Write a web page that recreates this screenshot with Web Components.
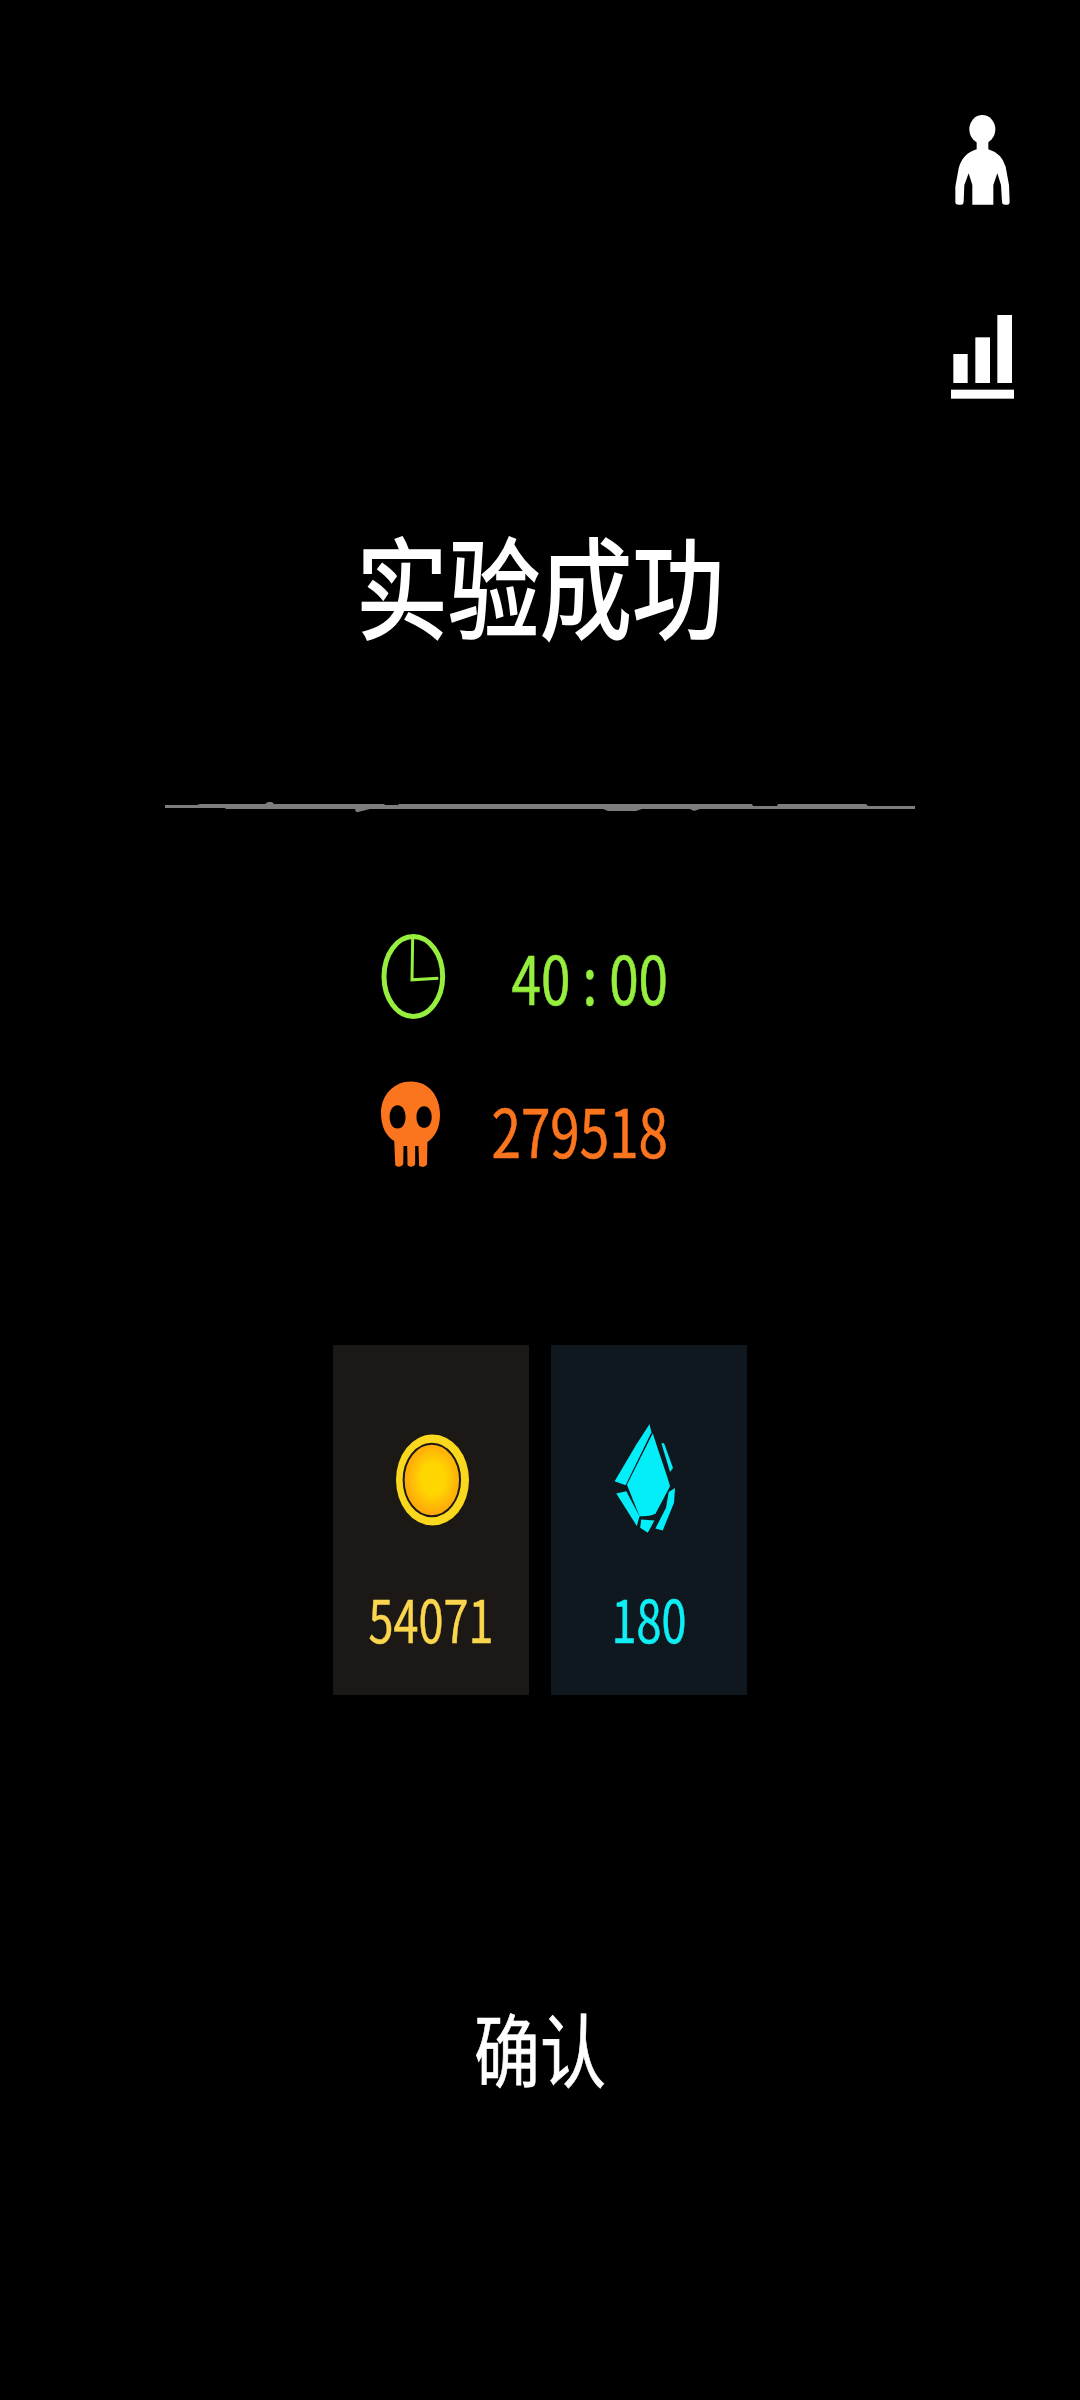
<!DOCTYPE html>
<html lang="zh-CN">
<head>
<meta charset="UTF-8">
<title>实验成功</title>
<style>
    html, body { margin: 0; background: #000; }
    body { width: 1080px; height: 2400px; overflow: hidden; }
</style>
</head>
<body>
    <result-screen>
        <side-nav slot="nav"></side-nav>
        <tall-text slot="title" size="92" box="120" stroke="1.6">实验成功</tall-text>
        <rough-line slot="line"></rough-line>
        <stat-row slot="stats" icon="clock" color="#96ee3f" shift="0">40<i>:</i>00</stat-row>
        <stat-row slot="stats" icon="skull" color="#fb741e" shift="10">279518</stat-row>
        <reward-card slot="cards" icon="coin" bg="#1c1815" color="#fad64e" value="54071"></reward-card>
        <reward-card slot="cards" icon="gem" bg="#10181f" color="#10eef5" value="180"></reward-card>
        <tall-text slot="confirm" size="66" box="90" stroke="0.6">确认</tall-text>
    </result-screen>

    <script>
        const ICONS = {
            clock: `<svg width="65" height="87" viewBox="120 95 195 260" fill="none" stroke="#96ee3f">
                <ellipse cx="217" cy="225" rx="88" ry="120" stroke-width="15"/>
                <path d="M215 110 L213 235 L292 230" stroke-width="9"/>
            </svg>`,
            skull: `<svg width="59" height="87" viewBox="125 545 178 260">
                <path fill="#fb741e" fill-rule="evenodd" d="M215 545 C270 545 303 590 303 645 C303 690 285 715 265 728 L264 795 Q258 806 245 802 L240 800 L238 740 L228 740 L228 796 Q218 808 205 798 L204 740 L193 740 L192 796 Q180 808 168 798 L165 725 C140 710 125 680 125 640 C125 585 165 545 215 545 Z
                M175 617 C160 617 151 633 151 652 C151 672 160 687 175 687 C190 687 199 672 199 652 C199 633 190 617 175 617 Z
                M255 620 C241 620 232 635 232 652 C232 671 241 685 255 685 C269 685 278 671 278 652 C278 635 269 620 255 620 Z"/>
            </svg>`,
            coin: `<svg style="margin:4px 0 0 3px" width="73" height="92" viewBox="227 310 220 274">
                <defs><radialGradient id="g" cx=".52" cy=".48" r=".52">
                    <stop offset=".4" stop-color="#ffd600"/><stop offset="1" stop-color="#ffa40c"/>
                </radialGradient></defs>
                <ellipse cx="337" cy="447" rx="110" ry="137" fill="#f9d81e"/>
                <ellipse cx="335" cy="447" rx="85" ry="109" fill="url(#g)" stroke="#1c1815" stroke-width="6"/>
            </svg>`,
            gem: `<svg style="margin-right:9px" width="63" height="110" viewBox="880 275 190 330" fill="#04eefa">
                <path d="M1000 305 C1020 370 1040 420 1052 465 L1008 548 C990 556 975 556 960 555 L922 460 Z"/>
                <polygon points="990,278 996,302 918,462 885,450 950,340"/>
                <polygon points="1026,335 1034,335 1061,410 1052,422"/>
                <polygon points="890,487 920,480 960,555 952,585"/>
                <polygon points="965,565 1005,568 985,605 962,590"/>
                <polygon points="1048,482 1067,470 1064,515 1030,598 1008,592 1040,530"/>
            </svg>`
        };

        // the reference is stretched vertically, so text is drawn with a scaleY
        class TallText extends HTMLElement {
            constructor() {
                super();
                const size = this.getAttribute('size');
                const box = this.getAttribute('box');
                const stroke = this.getAttribute('stroke') || 0;
                this.attachShadow({mode: 'open'}).innerHTML = `
                    <style>
                        :host { display: block; height: ${box}px; text-align: center; color: inherit; }
                        span {
                            display: inline-block;
                            font: 400 ${size}px/${box}px "Noto Sans CJK SC", "Noto Sans", sans-serif;
                            -webkit-text-stroke: ${stroke}px currentColor;
                            transform: scaleY(1.2);
                        }
                    </style>
                    <span><slot></slot></span>
                `;
            }
        }
        customElements.define('tall-text', TallText);

        class SideNav extends HTMLElement {
            constructor() {
                super();
                this.attachShadow({mode: 'open'}).innerHTML = `
                    <style>
                        :host { display: flex; flex-direction: column; align-items: center; gap: 110px; width: 63px; }
                        svg { display: block; }
                    </style>
                    <svg width="55" height="90" viewBox="105 75 165 270" fill="#fff">
                        <ellipse cx="187" cy="118" rx="39" ry="43"/>
                        <path d="M170 150 L170 178 Q128 190 116 235 L106 290 L106 336 Q106 344 116 344 L124 344 Q130 344 131 335 L133 285 L146 250 L157 285 L157 344 L220 344 L220 285 L232 250 L243 285 L246 335 Q246 344 255 344 L262 344 Q269 344 269 335 L267 285 L257 230 Q245 190 205 178 L205 150 Z"/>
                    </svg>
                    <svg width="63" height="84" viewBox="93 676 189 252" fill="#fff">
                        <rect x="100" y="793" width="43" height="87"/>
                        <rect x="166" y="743" width="44" height="137"/>
                        <rect x="232" y="676" width="44" height="204"/>
                        <rect x="93" y="900" width="189" height="27"/>
                    </svg>
                `;
            }
        }
        customElements.define('side-nav', SideNav);

        class RoughLine extends HTMLElement {
            constructor() {
                super();
                this.attachShadow({mode: 'open'}).innerHTML = `
                    <style>
                        :host { display: block; width: 750px; height: 12px; }
                        svg { display: block; }
                    </style>
                    <svg width="750" height="12" viewBox="165 800 750 12" fill="#7d7d7d">
                        <path d="M165 804 L197 804 L200 803 L265 803 L268 801 L272 801 L274 803 L384 803 L385 804 L398 804 L399 803 L752 803 L753 805 L777 805 L778 803 L866 803 L868 805 L915 805 L915 808 L700 808 L694 810 L690 808 L642 808 L636 810 L608 810 L603 808 L370 808 L358 811 L356 811 L355 808 L226 808 L225 807 L165 807 Z"/>
                    </svg>
                `;
            }
        }
        customElements.define('rough-line', RoughLine);

        class StatRow extends HTMLElement {
            constructor() {
                super();
                const color = this.getAttribute('color');
                this.attachShadow({mode: 'open'}).innerHTML = `
                    <style>
                        :host { display: flex; justify-content: space-between; align-items: center; width: 287px; height: 87px; color: ${color}; }
                        svg { display: block; }
                        span {
                            margin-top: ${this.getAttribute('shift') || 0}px;
                            font: 400 53px/87px "Noto Sans CJK SC", "Noto Sans", sans-serif;
                            -webkit-text-stroke: 0.5px currentColor;
                            transform: scaleY(1.25);
                        }
                        ::slotted(i) { font-style: normal; margin: 0 12px; }
                    </style>
                    ${ICONS[this.getAttribute('icon')]}
                    <span><slot></slot></span>
                `;
            }
        }
        customElements.define('stat-row', StatRow);

        class RewardCard extends HTMLElement {
            constructor() {
                super();
                this.attachShadow({mode: 'open'}).innerHTML = `
                    <style>
                        :host {
                            display: flex; flex-direction: column; align-items: center;
                            width: 196px; height: 350px;
                            background: ${this.getAttribute('bg')};
                            color: ${this.getAttribute('color')};
                        }
                        .icon { height: 110px; margin-top: 78px; display: flex; align-items: center; }
                        svg { display: block; }
                        span {
                            margin-top: 62px;
                            font: 400 45px/46px "Noto Sans CJK SC", "Noto Sans", sans-serif;
                            -webkit-text-stroke: 0.4px currentColor;
                            transform: scaleY(1.3);
                        }
                    </style>
                    <div class="icon">${ICONS[this.getAttribute('icon')]}</div>
                    <span>${this.getAttribute('value')}</span>
                `;
            }
        }
        customElements.define('reward-card', RewardCard);

        class ResultScreen extends HTMLElement {
            constructor() {
                super();
                this.attachShadow({mode: 'open'}).innerHTML = `
                    <style>
                        :host { display: flex; flex-direction: column; width: 1080px; height: 2400px; background: #000; color: #fff; }
                        .nav { display: flex; justify-content: flex-end; padding: 115px 66px 0 0; }
                        .title { margin-top: 124px; }
                        .line { display: flex; justify-content: center; margin-top: 158px; }
                        .stats { display: flex; flex-direction: column; gap: 61px; margin: 120px 0 0 381px; }
                        .cards { display: flex; justify-content: center; gap: 22px; margin-top: 177px; }
                        .confirm { margin-top: 306px; }
                    </style>
                    <div class="nav"><slot name="nav"></slot></div>
                    <div class="title"><slot name="title"></slot></div>
                    <div class="line"><slot name="line"></slot></div>
                    <div class="stats"><slot name="stats"></slot></div>
                    <div class="cards"><slot name="cards"></slot></div>
                    <div class="confirm"><slot name="confirm"></slot></div>
                `;
            }
        }
        customElements.define('result-screen', ResultScreen);
    </script>
</body>
</html>
